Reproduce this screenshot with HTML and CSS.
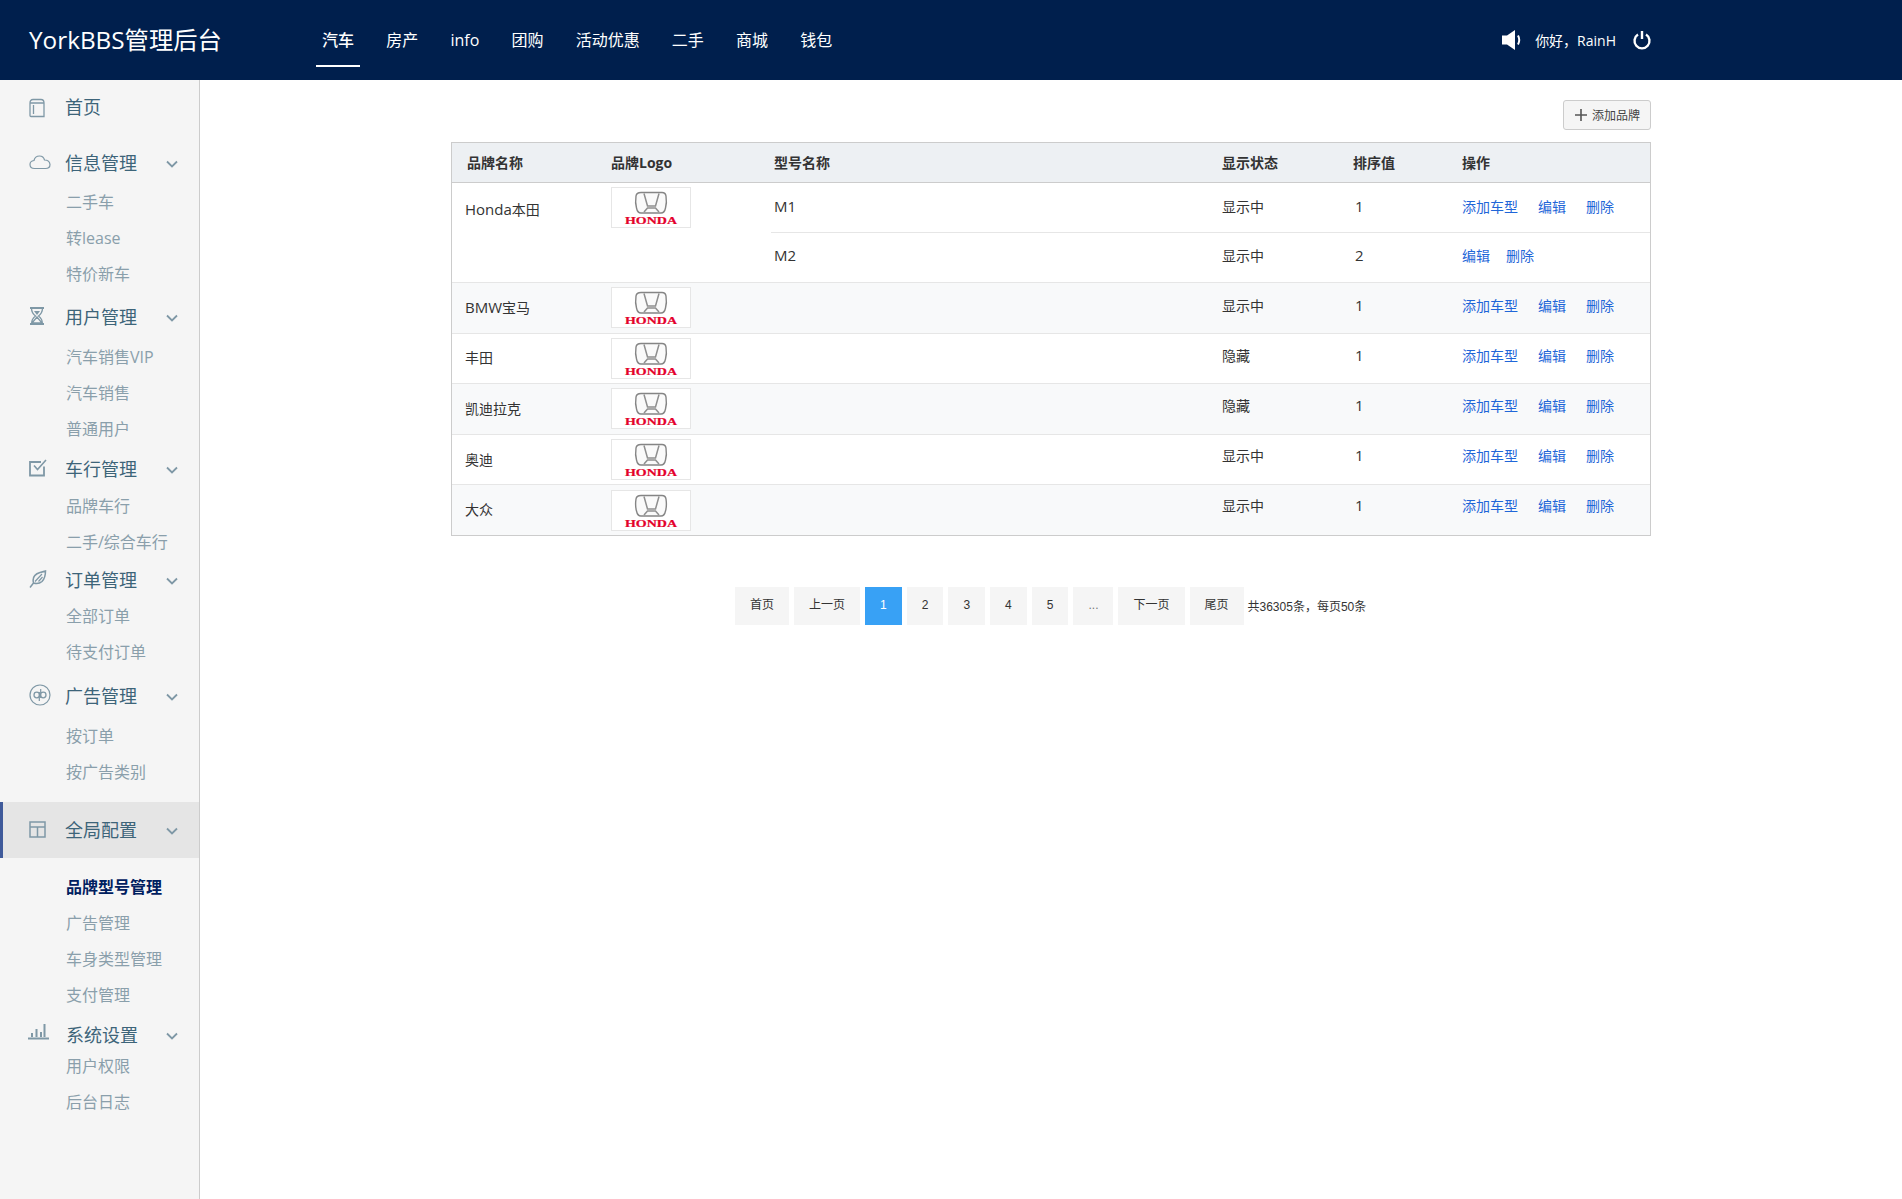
FILE: index.html
```html
<!DOCTYPE html>
<html lang="zh-CN">
<head>
<meta charset="utf-8">
<title>YorkBBS管理后台</title>
<link rel="stylesheet" href="styles.css">
</head>
<body>
<svg class="defs" width="0" height="0" aria-hidden="true">
  <symbol id="honda" viewBox="0 0 78 39">
    <path d="M29 4.500h21q3.500 0 4 3.500q1 7-.5 12q-1 5-4.500 5h-20q-3.500 0-4.500-5q-1.500-5-.5-12q.5-3.500 5-3.500z" fill="#fafafa" stroke="#858585" stroke-width="1.400"/>
    <path d="M32 5.500L35.500 18H43.500L47 5.500M32 24L35.500 20H43.500L47 24" fill="none" stroke="#8f8f8f" stroke-width="1.500"/>
  </symbol>
</svg>
<header class="top">
  <div class="brand">YorkBBS管理后台</div>
  <nav class="topnav">
    <a class="topnav-item is-on">汽车</a>
    <a class="topnav-item">房产</a>
    <a class="topnav-item">info</a>
    <a class="topnav-item">团购</a>
    <a class="topnav-item">活动优惠</a>
    <a class="topnav-item">二手</a>
    <a class="topnav-item">商城</a>
    <a class="topnav-item">钱包</a>
  </nav>
  <div class="user">
    <svg class="ico-sound" width="20" height="20" viewBox="0 0 20 20"><path d="M0 5.500h5l8-5.500v20l-8-5.500H0z" fill="#fff"/><path d="M16 5.500q2.500 4.500 0 9" fill="none" stroke="#fff" stroke-width="2"/></svg>
    <span class="hello">你好，RainH</span>
    <svg class="ico-power" width="20" height="20" viewBox="0 0 20 20"><path d="M6 4.500a7.500 7.500 0 1 0 8 0" fill="none" stroke="#fff" stroke-width="2.400"/><path d="M10 1v8" stroke="#fff" stroke-width="2.400"/></svg>
  </div>
</header>
<div class="body">
  <aside class="side">
    <div class="group g-home">
      <a class="title"><span class="ico ico-low"><svg width="16" height="20" viewBox="0 0 16 20"><path d="M1 5q0-3.500 3-3.500h8q3 0 3 3.500v13.500H2q-1 0-1-1zM1 5h14M4.500 7v9" fill="none" stroke="#7f98a6" stroke-width="1.300"/></svg></span><span class="title-text">首页</span></a>
    </div>
    <div class="group g-info">
      <a class="title"><span class="ico"><svg width="22" height="16" viewBox="0 0 22 16"><path d="M5.500 14.500q-4.500 0-4.500-4q0-3.500 4-4q1-4.500 5.500-4.500q4 0 5 4q5 0 5.500 4.500q0 4-4.500 4z" fill="none" stroke="#7f98a6" stroke-width="1.200"/></svg></span><span class="title-text">信息管理</span><svg class="chev" width="12" height="8" viewBox="0 0 12 8"><path d="M1 1.500l5 5 5-5" fill="none" stroke="#7f98a6" stroke-width="1.800"/></svg></a>
      <div class="subs"><a class="sub">二手车</a><a class="sub">转lease</a><a class="sub">特价新车</a></div>
    </div>
    <div class="group g-user">
      <a class="title"><span class="ico"><svg width="16" height="18" viewBox="0 0 16 18"><path d="M1 1h14M1 17h14" stroke="#7f98a6" stroke-width="2"/><path d="M2.500 1q0 5 4 8q-4 3-4 8M13.500 1q0 5-4 8q4 3 4 8M3 16l5-6 5 6z" fill="none" stroke="#7f98a6" stroke-width="1.300"/><path d="M5 4h6l-3 4z" fill="#7f98a6"/></svg></span><span class="title-text">用户管理</span><svg class="chev" width="12" height="8" viewBox="0 0 12 8"><path d="M1 1.500l5 5 5-5" fill="none" stroke="#7f98a6" stroke-width="1.800"/></svg></a>
      <div class="subs"><a class="sub">汽车销售VIP</a><a class="sub">汽车销售</a><a class="sub">普通用户</a></div>
    </div>
    <div class="group g-car">
      <a class="title"><span class="ico"><svg width="18" height="18" viewBox="0 0 18 18"><path d="M15 7.500V16.500H1V3h11" fill="none" stroke="#7f98a6" stroke-width="1.800"/><path d="M5 6.500l3.500 4L17 1" fill="none" stroke="#7f98a6" stroke-width="1.600"/></svg></span><span class="title-text">车行管理</span><svg class="chev" width="12" height="8" viewBox="0 0 12 8"><path d="M1 1.500l5 5 5-5" fill="none" stroke="#7f98a6" stroke-width="1.800"/></svg></a>
      <div class="subs"><a class="sub">品牌车行</a><a class="sub">二手/综合车行</a></div>
    </div>
    <div class="group g-order">
      <a class="title"><span class="ico"><svg width="18" height="18" viewBox="0 0 18 18"><path d="M4.500 13Q2.500 5 11 2.500q4-1 5.500-1.500q0 7-3.500 10.500q-3.500 3-8.500 1.500zM1 17.500L4.500 13" fill="none" stroke="#7f98a6" stroke-width="1.500"/><path d="M6 11.500L13 4M9.500 11.500l4-4.500" fill="none" stroke="#7f98a6" stroke-width="1.200"/></svg></span><span class="title-text">订单管理</span><svg class="chev" width="12" height="8" viewBox="0 0 12 8"><path d="M1 1.500l5 5 5-5" fill="none" stroke="#7f98a6" stroke-width="1.800"/></svg></a>
      <div class="subs"><a class="sub">全部订单</a><a class="sub">待支付订单</a></div>
    </div>
    <div class="group g-ad">
      <a class="title"><span class="ico"><svg width="22" height="22" viewBox="0 0 22 22"><circle cx="11" cy="11" r="10" fill="none" stroke="#7f98a6" stroke-width="1.200"/><circle cx="7.800" cy="11" r="2.800" fill="none" stroke="#7f98a6" stroke-width="1.300"/><circle cx="14.200" cy="11" r="2.800" fill="none" stroke="#7f98a6" stroke-width="1.300"/><path d="M10.300 8v9M11.700 5v9" stroke="#7f98a6" stroke-width="1.200"/></svg></span><span class="title-text">广告管理</span><svg class="chev" width="12" height="8" viewBox="0 0 12 8"><path d="M1 1.500l5 5 5-5" fill="none" stroke="#7f98a6" stroke-width="1.800"/></svg></a>
      <div class="subs"><a class="sub">按订单</a><a class="sub">按广告类别</a></div>
    </div>
    <div class="group g-config">
      <a class="title is-open"><span class="ico"><svg width="17" height="17" viewBox="0 0 17 17"><path d="M1 1h15v15H1zM1 6h15M8.500 6v10" fill="none" stroke="#7f98a6" stroke-width="1.500"/></svg></span><span class="title-text">全局配置</span><svg class="chev" width="12" height="8" viewBox="0 0 12 8"><path d="M1 1.500l5 5 5-5" fill="none" stroke="#7f98a6" stroke-width="1.800"/></svg></a>
      <div class="subs"><a class="sub is-on">品牌型号管理</a><a class="sub">广告管理</a><a class="sub">车身类型管理</a><a class="sub">支付管理</a></div>
    </div>
    <div class="group g-sys">
      <a class="title"><span class="ico ico-bars"><svg width="21" height="17" viewBox="0 0 21 17"><path d="M0 15.500h21" stroke="#7f98a6" stroke-width="2"/><path d="M4 14V10M8.500 14V6M13 14V9M16.500 14V1" stroke="#7f98a6" stroke-width="2"/></svg></span><span class="title-text">系统设置</span><svg class="chev" width="12" height="8" viewBox="0 0 12 8"><path d="M1 1.500l5 5 5-5" fill="none" stroke="#7f98a6" stroke-width="1.800"/></svg></a>
      <div class="subs"><a class="sub">用户权限</a><a class="sub">后台日志</a></div>
    </div>
  </aside>
  <main class="main">
    <div class="content">
      <div class="toolbar">
        <button class="add-btn" type="button"><svg width="12" height="12" viewBox="0 0 12 12"><path d="M6 0v12M0 6h12" stroke="#555" stroke-width="1.600"/></svg><span>添加品牌</span></button>
      </div>
      <table class="grid">
        <colgroup><col class="c1"><col class="c2"><col class="c3"><col class="c4"><col class="c5"><col class="c6"></colgroup>
        <thead>
          <tr><th class="cell-name">品牌名称</th><th class="cell-logo">品牌Logo</th><th class="cell-model">型号名称</th><th class="cell-state">显示状态</th><th class="cell-sort">排序值</th><th class="cell-act">操作</th></tr>
        </thead>
        <tbody>
          <tr class="lift-a">
            <td class="cell-name cell-top" rowspan="2"><span class="en">Honda</span>本田</td>
            <td class="cell-logo cell-top" rowspan="2"><span class="logo"><svg width="78" height="39"><use href="#honda"/><text x="13" y="36" class="honda-word" textLength="52" lengthAdjust="spacingAndGlyphs">HONDA</text></svg></span></td>
            <td class="cell-model line"><span class="en">M1</span></td><td class="cell-state line">显示中</td><td class="cell-sort line"><span class="en">1</span></td>
            <td class="cell-act line"><a class="lnk">添加车型</a><a class="lnk">编辑</a><a class="lnk">删除</a></td>
          </tr>
          <tr class="lift-b">
            <td class="cell-model"><span class="en">M2</span></td><td class="cell-state">显示中</td><td class="cell-sort"><span class="en">2</span></td>
            <td class="cell-act cell-act-tight"><a class="lnk">编辑</a><a class="lnk">删除</a></td>
          </tr>
          <tr class="alt lift-b">
            <td class="cell-name"><span class="en">BMW</span>宝马</td><td class="cell-logo"><span class="logo"><svg width="78" height="39"><use href="#honda"/><text x="13" y="36" class="honda-word" textLength="52" lengthAdjust="spacingAndGlyphs">HONDA</text></svg></span></td>
            <td class="cell-model"></td><td class="cell-state">显示中</td><td class="cell-sort"><span class="en">1</span></td>
            <td class="cell-act"><a class="lnk">添加车型</a><a class="lnk">编辑</a><a class="lnk">删除</a></td>
          </tr>
          <tr class="lift-c">
            <td class="cell-name">丰田</td><td class="cell-logo"><span class="logo"><svg width="78" height="39"><use href="#honda"/><text x="13" y="36" class="honda-word" textLength="52" lengthAdjust="spacingAndGlyphs">HONDA</text></svg></span></td>
            <td class="cell-model"></td><td class="cell-state">隐藏</td><td class="cell-sort"><span class="en">1</span></td>
            <td class="cell-act"><a class="lnk">添加车型</a><a class="lnk">编辑</a><a class="lnk">删除</a></td>
          </tr>
          <tr class="alt lift-c row-tall">
            <td class="cell-name">凯迪拉克</td><td class="cell-logo"><span class="logo"><svg width="78" height="39"><use href="#honda"/><text x="13" y="36" class="honda-word" textLength="52" lengthAdjust="spacingAndGlyphs">HONDA</text></svg></span></td>
            <td class="cell-model"></td><td class="cell-state">隐藏</td><td class="cell-sort"><span class="en">1</span></td>
            <td class="cell-act"><a class="lnk">添加车型</a><a class="lnk">编辑</a><a class="lnk">删除</a></td>
          </tr>
          <tr class="lift-d">
            <td class="cell-name">奥迪</td><td class="cell-logo"><span class="logo"><svg width="78" height="39"><use href="#honda"/><text x="13" y="36" class="honda-word" textLength="52" lengthAdjust="spacingAndGlyphs">HONDA</text></svg></span></td>
            <td class="cell-model"></td><td class="cell-state">显示中</td><td class="cell-sort"><span class="en">1</span></td>
            <td class="cell-act"><a class="lnk">添加车型</a><a class="lnk">编辑</a><a class="lnk">删除</a></td>
          </tr>
          <tr class="alt lift-d">
            <td class="cell-name">大众</td><td class="cell-logo"><span class="logo"><svg width="78" height="39"><use href="#honda"/><text x="13" y="36" class="honda-word" textLength="52" lengthAdjust="spacingAndGlyphs">HONDA</text></svg></span></td>
            <td class="cell-model"></td><td class="cell-state">显示中</td><td class="cell-sort"><span class="en">1</span></td>
            <td class="cell-act"><a class="lnk">添加车型</a><a class="lnk">编辑</a><a class="lnk">删除</a></td>
          </tr>
        </tbody>
      </table>
      <div class="pager">
        <a class="page">首页</a><a class="page">上一页</a><a class="page is-on">1</a><a class="page">2</a><a class="page">3</a><a class="page">4</a><a class="page">5</a><a class="page page-more">...</a><a class="page">下一页</a><a class="page">尾页</a><span class="page-total">共36305条，每页50条</span>
      </div>
    </div>
  </main>
</div>
</body>
</html>
```

FILE: styles.css
```css
* { box-sizing: border-box; }
html, body { margin: 0; padding: 0; }
body {
  font-family: "Open Sans", "Noto Sans CJK SC", sans-serif;
  color: #333;
  background: #fff;
  height: 1199px;
  overflow: hidden;
  display: flex;
  flex-direction: column;
}
a { text-decoration: none; color: inherit; }
.defs { position: absolute; }
.honda-word { font: bold 9.500px "Liberation Serif", serif; fill: #e4002b; stroke: #e4002b; stroke-width: .2px; }

/* header */
.top {
  height: 80px;
  flex: none;
  background: #001f4d;
  color: #fff;
  display: flex;
  align-items: center;
  padding-left: 29px;
}
.brand { width: 287px; padding-bottom: 4px; font-size: 24.300px; white-space: nowrap; }
.topnav { display: flex; align-self: flex-start; gap: 20.200px; }
.topnav-item {
  height: 67px;
  padding: 26px 6px 0;
  font-size: 16px;
  line-height: 28px;
  border-bottom: 2px solid transparent;
  white-space: nowrap;
}
.topnav-item.is-on { border-bottom-color: #fff; font-weight: 500; }
.user { margin-left: auto; margin-right: 250px; display: flex; align-items: center; }
.hello { font-size: 14px; margin-left: 13px; margin-right: 16px; white-space: nowrap; }
.ico-sound, .ico-power { display: block; }

/* sidebar */
.body { flex: 1; display: flex; min-height: 0; }
.side {
  width: 200px;
  flex: none;
  background: #f5f5f5;
  border-right: 1px solid #ccc;
  padding-top: 7px;
}
.title {
  display: flex;
  align-items: center;
  height: 40px;
  padding: 0 21px 2px 29px;
  font-size: 18px;
  color: #3d6479;
}
.ico { width: 36px; flex: none; display: flex; align-items: center; }
.ico-low { margin-top: 4px; }
.ico svg { display: block; }
.ico-bars { margin-left: -1px; margin-top: -6px; width: 38px; }
.title-text { white-space: nowrap; }
.chev { margin-left: auto; margin-top: 3px; display: block; }
.title.is-open {
  height: 56px;
  background: #e5e5e5;
  border-left: 3px solid #3f5a9a;
  padding-left: 26px;
}
.subs { display: flex; flex-direction: column; }
.sub {
  display: block;
  height: 36px;
  line-height: 36px;
  padding-left: 66px;
  font-size: 16px;
  color: #8a9fab;
  white-space: nowrap;
}
.sub.is-on { color: #00205f; font-weight: 700; }
.g-info { margin-top: 16px; }
.g-info .subs { margin-top: 1px; }
.g-user { margin-top: 5px; }
.g-user .subs { margin-top: 2px; }
.g-car { margin-top: 2px; }
.g-car .subs { margin-top: -1px; }
.g-order .subs { margin-top: -2px; }
.g-ad { margin-top: 6px; }
.g-ad .subs { margin-top: 2px; }
.g-config { margin-top: 12px; }
.g-config .subs { margin-top: 11px; }
.g-sys { margin-top: 2px; }
.g-sys .subs { margin-top: -7px; }

/* main */
.main { flex: 1; min-width: 0; }
.content { width: 1200px; margin: 0 auto; }
.toolbar { display: flex; justify-content: flex-end; padding-top: 20px; height: 62px; }
.add-btn {
  width: 88px;
  height: 30px;
  padding: 0 0 0 11px;
  display: flex;
  align-items: center;
  gap: 5px;
  background: #f5f5f5;
  border: 1px solid #ccc;
  border-radius: 3px;
  font: 12px "Open Sans", "Noto Sans CJK SC", sans-serif;
  color: #444;
  white-space: nowrap;
}
.grid {
  width: 1200px;
  table-layout: fixed;
  border-collapse: separate;
  border-spacing: 0;
  border: 1px solid #ccc;
  font-size: 14px;
}
.c1 { width: 159px; }
.c2 { width: 160px; }
.c3 { width: 450px; }
.c4 { width: 132px; }
.c5 { width: 109px; }
.c6 { width: 188px; }
.grid th {
  height: 40px;
  background: #edf0f3;
  border-bottom: 1px solid #ccc;
  text-align: left;
  font-weight: 700;
  padding: 0 0 2px;
}
.grid td {
  height: 50.200px;
  padding: 0;
  border-bottom: 1px solid #e6e6e6;
  vertical-align: middle;
}
.grid tr.row-tall td { height: 51.200px; }
.grid tbody tr:last-child td { border-bottom: 0; }
.grid tr.alt td { background: #f8f9fa; }
.en { font-size: 15px; }
.lift-a { --lift: 4px; }
.lift-b { --lift: 5px; }
.lift-c { --lift: 7px; }
.lift-d { --lift: 10px; }
.grid td.cell-model, .grid td.cell-state, .grid td.cell-sort, .grid td.cell-act { padding-bottom: var(--lift); }
.grid th.cell-name { padding-left: 15px; }
.grid td.cell-name { padding-left: 13px; padding-bottom: 2px; }
.grid .cell-model { padding-left: 3px; }
.grid .cell-state { padding-left: 1px; }
.grid td.cell-sort { padding-left: 2px; }
.grid td.cell-top { vertical-align: top; }
.grid td.cell-name.cell-top { padding-top: 16px; }
.grid td.cell-logo.cell-top { padding-top: 4px; }
.logo {
  display: block;
  width: 80px;
  height: 41px;
  background: #fff;
  border: 1px solid #e6e6e6;
}
.logo svg { display: block; }
.lnk { color: #1f66d8; margin-right: 20px; }
.cell-act-tight .lnk { margin-right: 16px; }

/* pager */
.pager {
  display: flex;
  align-items: center;
  gap: 5px;
  margin-top: 51px;
  padding-left: 284px;
  font-family: "Liberation Sans", "Noto Sans CJK SC", sans-serif;
  font-size: 12px;
  white-space: nowrap;
}
.page {
  height: 38px;
  line-height: 37px;
  padding: 0 15px;
  background: #f5f5f5;
  color: #333;
  text-align: center;
}
.page-more { color: #777; }
.page.is-on { background: #38a1f5; color: #fff; }
.page-total { color: #333; margin-left: -1px; margin-top: -2px; }
```
